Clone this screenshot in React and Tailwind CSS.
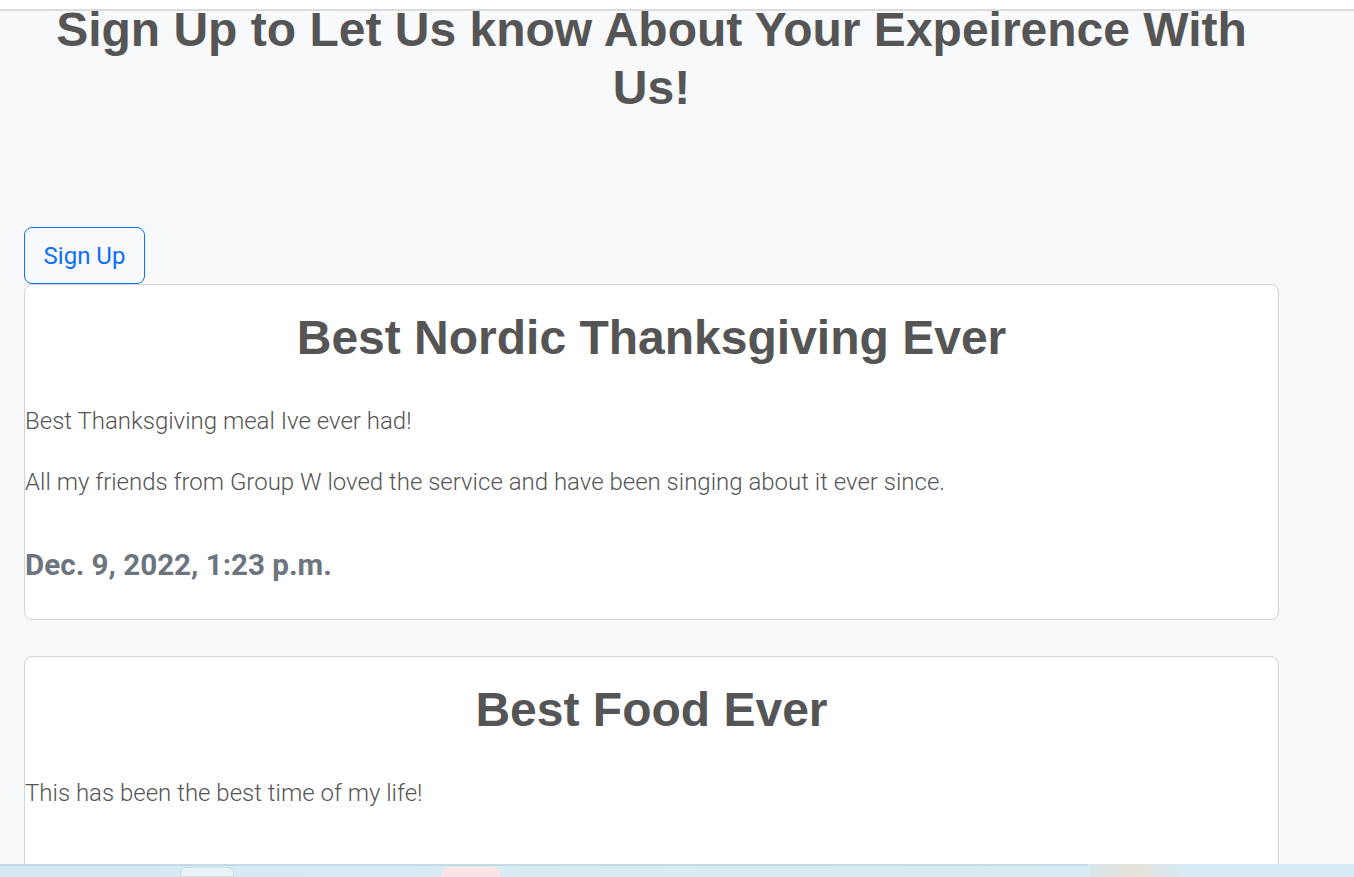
export default function App() {
  const heading = { fontFamily: '"Liberation Sans", Arial, sans-serif' };
  const body = { fontFamily: 'Roboto, "Noto Sans", sans-serif' };
  return (
    <div className="min-h-screen bg-[#f8f9fa] overflow-hidden">
      <div className="fixed top-0 left-0 right-0 h-[11px] bg-white border-b-2 border-[#dcdcdc] z-10" />
      <div className="w-[1303px] px-6 pb-10">
        <h1 style={heading} className="mt-[1px] text-center font-bold text-[48px] leading-[58px] text-[#555555]">
          Sign Up to Let Us know About Your Expeirence With Us!
        </h1>
        <button style={body} className="mt-[110px] w-[121px] h-[57px] border border-[#0d6efd] rounded-lg text-[#0d6efd] text-[24px] flex items-center justify-center">
          Sign Up
        </button>
        <div className="flex flex-col gap-9">
          <div className="bg-white border border-[#d3d3d3] rounded-lg h-[336px]">
            <h2 style={heading} className="mt-[24px] text-center font-bold text-[48px] leading-[58px] text-[#555555]">
              Best Nordic Thanksgiving Ever
            </h2>
            <p style={body} className="mt-[36px] font-light text-[24px] leading-[36px] text-[#555555]">
              Best Thanksgiving meal Ive ever had!
            </p>
            <p style={body} className="mt-[25px] font-light text-[24px] leading-[36px] text-[#555555]">
              All my friends from Group W loved the service and have been singing about it ever since.
            </p>
            <h3 style={body} className="mt-[47px] font-bold text-[29.6px] leading-[36px] text-[#6c757d]">
              Dec. 9, 2022, 1:23 p.m.
            </h3>
          </div>
          <div className="bg-white border border-[#d3d3d3] rounded-lg h-[336px]">
            <h2 style={heading} className="mt-[24px] text-center font-bold text-[48px] leading-[58px] text-[#555555]">
              Best Food Ever
            </h2>
            <p style={body} className="mt-[36px] font-light text-[24px] leading-[36px] text-[#555555]">
              This has been the best time of my life!
            </p>
          </div>
        </div>
      </div>
      <div className="fixed bottom-0 left-0 right-0 h-[13px] bg-gradient-to-r from-[#d3e8f2] via-[#d8ecf3] to-[#d6eaf3] z-10">
        <div className="absolute top-0 left-0 w-[1088px] h-[2px] bg-[#c5dbe4]" />
        <div className="absolute top-[3px] left-[180px] w-[54px] h-[10px] rounded-t-md bg-[#e8f3f8] border border-[#c9dde6]" />
        <div className="absolute top-[3px] left-[442px] w-[58px] h-[10px] rounded-t-md bg-[#fbe3e6]" />
        <div className="absolute top-0 left-[1090px] w-[90px] h-[13px] bg-gradient-to-r from-[#d8e6ea] via-[#e6e2d8] to-[#d6eaf3]" />
      </div>
    </div>
  );
}
